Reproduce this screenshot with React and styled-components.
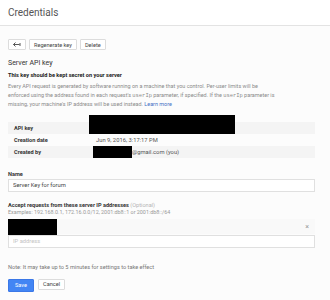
import React from "react";
import styled, { createGlobalStyle } from "styled-components";

const App = () => {
  return (
    <>
      <GlobalStyle />
      <Header>
        <Title>Credentials</Title>
      </Header>
      <Main>
        <Toolbar>
          <Button aria-label="back">
            <svg width="8" height="5" viewBox="0 0 16 10">
              <path d="M1 5 H13 M5 1 L1 5 L5 9 M14 2 V8" stroke="#444" strokeWidth="1.8" fill="none" />
            </svg>
          </Button>
          <Button>Regenerate key</Button>
          <Button>Delete</Button>
        </Toolbar>
        <SectionTitle>Server API key</SectionTitle>
        <Warning>This key should be kept secret on your server</Warning>
        <Description>
          Every API request is generated by software running on a machine that you control. Per-user limits will be
          <br />
          enforced using the address found in each request's <Code>userIp</Code> parameter, if specified. If the <Code>userIp</Code> parameter is
          <br />
          missing, your machine's IP address will be used instead. <LinkText>Learn more</LinkText>
        </Description>
        <Table>
          <Row $shade>
            <Label>API key</Label>
            <Value>
              <Redaction $left={-7} $width={146} $top={-7} $height={19} />
            </Value>
          </Row>
          <Row>
            <Label>Creation date</Label>
            <Value>Jun 9, 2016, 3:17:17 PM</Value>
          </Row>
          <Row $shade>
            <Label>Created by</Label>
            <Value>
              <InlineRedaction $width={39} $shift={-3} />
              @gmail.com (you)
            </Value>
          </Row>
        </Table>
        <FieldLabel $gap={12}>Name</FieldLabel>
        <Input defaultValue="Server Key for forum" />
        <FieldLabel $gap={9}>
          Accept requests from these server IP addresses <Optional>(Optional)</Optional>
        </FieldLabel>
        <Hint>Examples: 192.168.0.1, 172.16.0.0/12, 2001:db8::1 or 2001:db8::/64</Hint>
        <IpRow>
          <InlineRedaction $width={49} $height={16} />
          <Remove>×</Remove>
        </IpRow>
        <Input placeholder="IP address" />
        <Note>Note: It may take up to 5 minutes for settings to take effect</Note>
        <Actions>
          <Button $primary>Save</Button>
          <Button>Cancel</Button>
        </Actions>
      </Main>
    </>
  );
};

export default App;

const GlobalStyle = createGlobalStyle`
  body {
    margin: 0;
    padding: 0;
    background: #fcfcfc;
    font-family: Roboto, "Liberation Sans", sans-serif;
    color: #333;
  }
`;
const Header = styled.div`
  height: 25px;
  padding: 0 8px;
  background: #fff;
  border-bottom: 1px solid #e3e3e3;
  display: flex;
  align-items: center;
`;
const Title = styled.div`
  font-size: 10px;
  color: #555;
`;
const Main = styled.div`
  padding: 0 8px;
  width: 307px;
`;
const Toolbar = styled.div`
  margin-top: 13px;
  display: flex;
  gap: 3px;
`;
const Button = styled.button`
  height: ${(p) => (p.$primary ? 13 : 11)}px;
  padding: 0 ${(p) => (p.$primary ? 6 : 4)}px;
  min-width: ${(p) => (p.$primary ? 26 : 18)}px;
  display: flex;
  align-items: center;
  justify-content: center;
  font-family: Roboto, "Liberation Sans", sans-serif;
  font-size: 5.6px;
  color: ${(p) => (p.$primary ? "#fff" : "#444")};
  background: ${(p) => (p.$primary ? "#4285f4" : "#fff")};
  border: 1px solid ${(p) => (p.$primary ? "#3b78e7" : "#dcdcdc")};
  border-radius: 1px;
`;
const SectionTitle = styled.div`
  margin-top: 8px;
  font-size: 7px;
  line-height: 10px;
  color: #333;
`;
const Warning = styled.div`
  margin-top: 3px;
  font-size: 5.6px;
  line-height: 8px;
  font-weight: 700;
  color: #222;
`;
const Description = styled.div`
  margin-top: 3px;
  font-size: 5.45px;
  line-height: 8.5px;
  color: #8a8a8a;
  white-space: nowrap;
`;
const Code = styled.span`
  font-family: "Liberation Mono", monospace;
`;
const LinkText = styled.span`
  color: #4470c4;
`;
const Table = styled.div`
  margin-top: 13px;
  width: 307px;
`;
const Row = styled.div`
  height: 12px;
  display: grid;
  grid-template-columns: 88px 1fr;
  align-items: center;
  background: ${(p) => (p.$shade ? "#f4f4f4" : "transparent")};
`;
const Label = styled.div`
  padding-left: 6px;
  font-size: 5.6px;
  font-weight: 700;
  color: #333;
`;
const Value = styled.div`
  position: relative;
  height: 12px;
  display: flex;
  align-items: center;
  font-size: 5.8px;
  color: #555;
`;
const Redaction = styled.div`
  position: absolute;
  left: ${(p) => p.$left}px;
  top: ${(p) => p.$top}px;
  width: ${(p) => p.$width}px;
  height: ${(p) => p.$height}px;
  background: #000;
`;
const InlineRedaction = styled.span`
  display: inline-block;
  margin-left: ${(p) => p.$shift || 0}px;
  width: ${(p) => p.$width}px;
  height: ${(p) => p.$height || 12}px;
  background: #000;
`;
const FieldLabel = styled.div`
  margin-top: ${(p) => p.$gap}px;
  font-size: 5.6px;
  line-height: 8px;
  font-weight: 700;
  color: #333;
`;
const Optional = styled.span`
  font-weight: 400;
  color: #b5b5b5;
`;
const Input = styled.input`
  display: block;
  box-sizing: border-box;
  margin-top: 1px;
  width: 307px;
  height: 13px;
  padding: 0 4px;
  border: 1px solid #e0e0e0;
  background: #fff;
  font-family: Roboto, "Liberation Sans", sans-serif;
  font-size: 5.8px;
  color: #444;
  outline: none;
  &::placeholder {
    color: #c4c4c4;
  }
`;
const Hint = styled.div`
  font-size: 5.4px;
  line-height: 7px;
  color: #999;
`;
const IpRow = styled.div`
  margin-top: 3px;
  height: 15px;
  display: flex;
  align-items: flex-start;
  justify-content: space-between;
  background: #f9f9f9;
`;
const Remove = styled.span`
  margin: 4px 6px 0 0;
  font-size: 7px;
  line-height: 8px;
  color: #999;
`;
const Note = styled.div`
  margin-top: 15px;
  font-size: 5.6px;
  line-height: 8px;
  color: #777;
`;
const Actions = styled.div`
  margin-top: 8px;
  display: flex;
  gap: 4px;
`;
